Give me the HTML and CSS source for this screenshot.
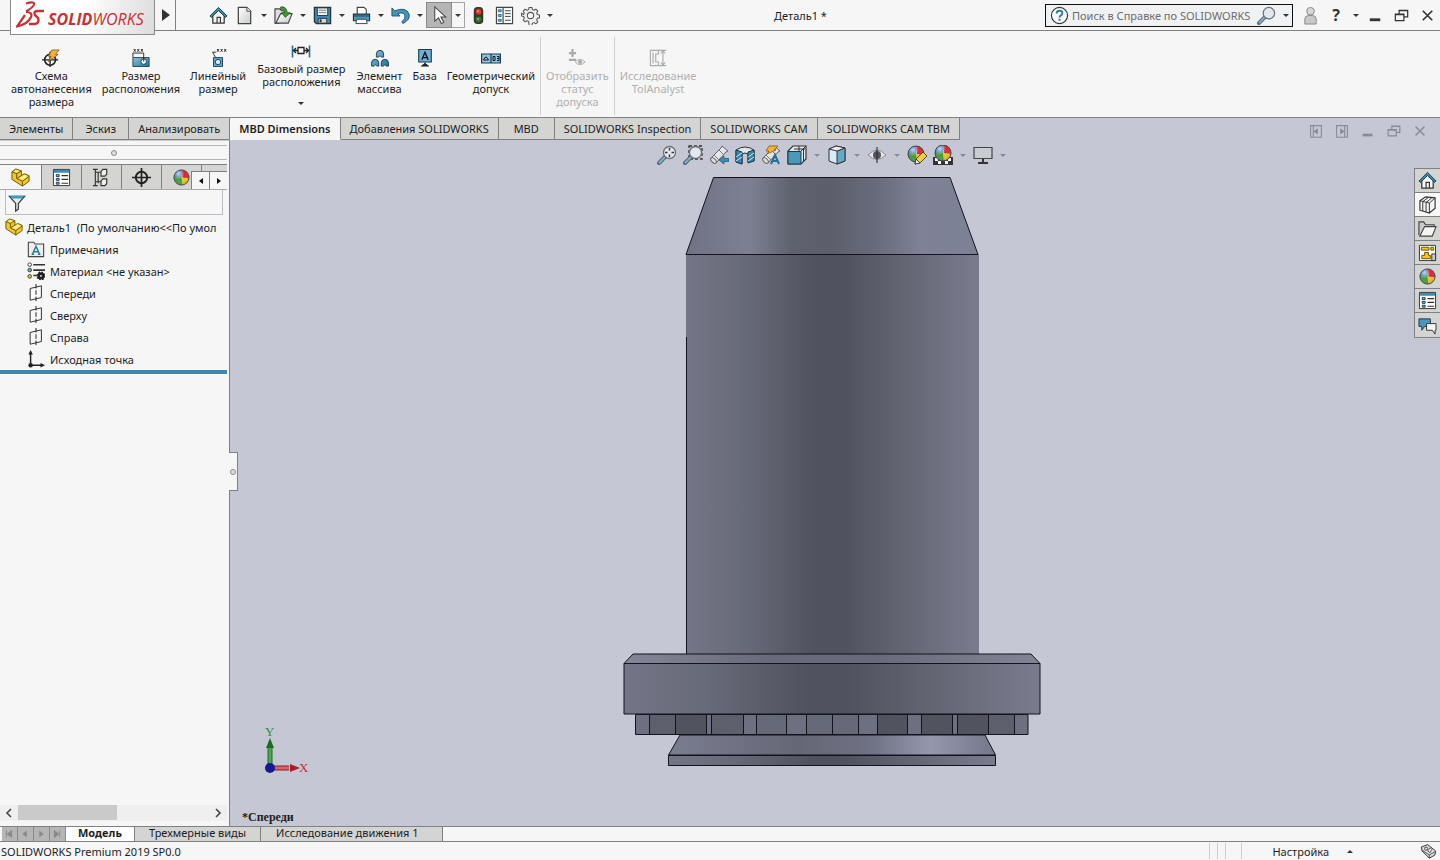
FILE: index.html
```html
<!DOCTYPE html>
<html lang="ru">
<head>
    <meta charset="UTF-8">
    <meta name="viewport" content="width=device-width, initial-scale=1.0">
    <title>Деталь1 - SOLIDWORKS</title>
    <link rel="stylesheet" href="styles.css">
</head>
<body>
    <!-- shared icons -->
    <svg class="sprite" aria-hidden="true">
        <defs>
            <linearGradient id="g-steel" x1="0" x2="1" y1="0" y2="1"><stop offset="0" stop-color="#8fc3dc"/><stop offset="1" stop-color="#256f96"/></linearGradient>
            <linearGradient id="g-paper" x1="0" x2="1" y1="0" y2="1"><stop offset="0" stop-color="#fff"/><stop offset="1" stop-color="#c9cbcc"/></linearGradient>
            <clipPath id="ball"><circle cx="10" cy="10" r="8"/></clipPath>
            <radialGradient id="g-shine" cx=".35" cy=".3" r=".8"><stop offset="0" stop-color="#fff" stop-opacity=".7"/><stop offset=".4" stop-color="#fff" stop-opacity="0"/><stop offset="1" stop-color="#000" stop-opacity=".4"/></radialGradient>
        </defs>
        <symbol id="i-home" viewBox="0 0 20 20">
            <path d="M4 10v8h12v-8l-6-6z" fill="#f6f6f6" stroke="#333" stroke-width="1.3"/>
            <path d="M8.500 18v-6h3.500v6" fill="none" stroke="#333" stroke-width="1.200"/>
            <path d="M1 10.500 10 1.500l9 9-1.500 1.500L10 4.800 2.500 12z" fill="#3f8bb0" stroke="#173c50"/>
        </symbol>
        <symbol id="i-ball" viewBox="0 0 20 20">
            <g clip-path="url(#ball)">
                <path d="M0 0h11l-1 10-10 1z" fill="#2f6fc4"/><path d="M10 0h10v13l-9-3z" fill="#d8262c"/>
                <path d="M0 10l10-1 2 11H0z" fill="#3f9d3a"/><path d="M10 10l10 1v9h-9z" fill="#f0c22c"/>
                <path d="M0 0h20v20H0z" fill="url(#g-shine)"/>
            </g>
            <circle cx="10" cy="10" r="8" fill="none" stroke="#444"/>
        </symbol>
        <symbol id="i-list" viewBox="0 0 20 20">
            <path d="M1.500 1.500h17v17h-17z" fill="#fff" stroke="#333"/><path d="M2 2h16v3H2z" fill="#3f8bb0"/>
            <path d="M4.500 7h3v2h-3zM4.500 11h3v2h-3zM4.500 15h3v2h-3z" fill="#8fc3dc" stroke="#173c50"/>
            <path d="M10 8h7M10 12h7M10 16h7" stroke="#333" stroke-width="1.200"/>
        </symbol>
        <symbol id="i-part" viewBox="0 0 20 20">
            <path d="M1 4l4-3 6 2v5l3-2 5 2v6l-7 5-11-7z" fill="#f2c62f" stroke="#6b5200" stroke-linejoin="round"/>
            <path d="M1 4l5 2 5-3M6 6v5l6 3 7-5M12 14v5M6 11l5-3" fill="none" stroke="#6b5200"/>
            <path d="M3 4l2.500-2L9 3.200 6 5zM8 10.800l3-1.800 3-2 3.500 1.500L12 12.800z" fill="#ffeb8a"/>
        </symbol>
        <symbol id="i-plane" viewBox="0 0 20 20">
            <path d="M3.500 5 16 2v13L3.500 18z" fill="#fafafa" stroke="#333" stroke-width="1.100"/>
            <path d="M10 0v20" stroke="#222" stroke-width="1.100" stroke-dasharray="5 2"/>
        </symbol>
        <symbol id="i-min" viewBox="0 0 20 20"><path d="M4 13h11v3H4z" fill="currentColor"/></symbol>
        <symbol id="i-restore" viewBox="0 0 20 20"><path d="M3.500 8.500h9v7h-9zM7.500 8V4.500h9v7H13M3 9h10M7 5h10" fill="none" stroke="currentColor" stroke-width="1.300"/></symbol>
        <symbol id="i-close" viewBox="0 0 20 20"><path d="M5 5l10 10M15 5 5 15" stroke="currentColor" stroke-width="1.700"/></symbol>
        <symbol id="i-glass" viewBox="0 0 20 20">
            <path d="M2 18l6-6" stroke="#59666f" stroke-width="4" stroke-linecap="round"/><path d="M2.500 17.500 8 12" stroke="#7fb2c9" stroke-width="2" stroke-linecap="round"/>
            <circle cx="12.500" cy="7.500" r="6" fill="#e3e8ee" stroke="#6b7077" stroke-width="1.300"/>
        </symbol>
        <symbol id="i-scope" viewBox="0 0 20 20">
            <path d="M2 13 12 3l1-2 6 5-2 1L8 17l-4 1z" fill="url(#g-paper)" stroke="#666"/>
            <path d="M5 10l5 5M10 5l5 5" stroke="#777" fill="none"/><ellipse cx="4.500" cy="15.500" rx="2" ry="3.500" transform="rotate(-45 4.500 15.500)" fill="#ddd" stroke="#666"/>
        </symbol>
    </svg>

    <header class="titlebar">
        <a class="logo" href="#" aria-label="SOLIDWORKS">
            <svg class="logo-mark" viewBox="0 0 28 28" aria-hidden="true">
                <path d="M10 2.500q9-2.500 8 1-1 3-8 7M10 11q7 0 5 5-3 7-14 9.500L9 14" fill="none" stroke="#c8312f" stroke-width="2.200"/>
                <path d="M28 10h-6q-5 0-3 4l3 3q2 5-3 6h-6" fill="none" stroke="#c8312f" stroke-width="2.400"/>
            </svg>
            <span class="logo-text"><b>SOLID</b>WORKS</span>
        </a>
        <button class="flyout" aria-label="Меню"></button>
        <nav class="quick">
            <button class="tool" aria-label="Домой"><svg class="icon"><use href="#i-home"/></svg></button>
            <button class="tool" aria-label="Создать"><svg class="icon" viewBox="0 0 20 20"><path d="M3.500 1.500h9l4 4v13h-13z" fill="url(#g-paper)" stroke="#444" stroke-width="1.300"/><path d="M12.500 1.500v4h4" fill="#fff" stroke="#444"/></svg></button>
            <button class="caret" aria-label="Ещё"></button>
            <button class="tool" aria-label="Открыть"><svg class="icon" viewBox="0 0 20 20"><path d="M1 18V3h5l2 2h3v4l-6 9z" fill="#ddd" stroke="#444" stroke-width="1.200"/><path d="M2 18l5-10h12l-4 10z" fill="url(#g-paper)" stroke="#444" stroke-width="1.200"/><path d="M7 1q6-1 7 6h3l-5 5-4-5h3q0-3-4-4z" fill="#3f9d26" stroke="#1d5a12" stroke-width=".8"/></svg></button>
            <button class="caret" aria-label="Ещё"></button>
            <button class="tool" aria-label="Сохранить"><svg class="icon" viewBox="0 0 20 20"><path d="M1.500 1.500h17v17h-15l-2-2z" fill="#3f8bb0" stroke="#24343e" stroke-width="1.400"/><path d="M4.500 2h11v8h-11z" fill="#f4f6f7" stroke="#24343e"/><path d="M6 4.500h8M6 7h8" stroke="#777"/><path d="M5.500 13h9v5h-9z" fill="#d8dadb" stroke="#24343e"/><path d="M7 14h2v3H7z" fill="#24343e"/></svg></button>
            <button class="caret" aria-label="Ещё"></button>
            <button class="tool" aria-label="Печать"><svg class="icon" viewBox="0 0 20 20"><path d="M5.500 9V1.500h7l2.500 2V9" fill="#fff" stroke="#444" stroke-width="1.200"/><path d="M1.500 8.500h17v7h-17z" fill="#4c9ac0" stroke="#24343e" stroke-width="1.200"/><path d="M2 10.500h16" stroke="#173c50"/><path d="M5 14h10l1 4.500H4z" fill="#fff" stroke="#444"/></svg></button>
            <button class="caret" aria-label="Ещё"></button>
            <button class="tool" aria-label="Отменить"><svg class="icon" viewBox="0 0 20 20"><path d="M1 2v8.500h8.500L7 8q6-2 7.500 1.500 1.500 4-3 7l1 2q8-4 6.500-10Q16 .500 4 5z" fill="#4694bb" stroke="#1f5674"/></svg></button>
            <button class="caret" aria-label="Ещё"></button>
            <button class="tool pressed" aria-label="Выбрать"><svg class="icon" viewBox="0 0 20 20"><path d="M5 1v15l4-3.500 3 6 2.500-1.500-3-5.500h5z" fill="#fff" stroke="#444" stroke-width="1.100"/></svg></button>
            <button class="caret framed" aria-label="Ещё"></button>
            <button class="tool" aria-label="Перестроить"><svg class="icon" viewBox="0 0 20 20"><rect x="5" y="1" width="10" height="18" rx="4" fill="#3a3432"/><circle cx="10" cy="6" r="3" fill="#dd3a27"/><circle cx="9.500" cy="5.500" r="1" fill="#f7a08c"/><circle cx="10" cy="14" r="3" fill="#2f7d2c"/><circle cx="9.500" cy="13.500" r="1" fill="#8cc98a"/></svg></button>
            <button class="tool" aria-label="Свойства файла"><svg class="icon" viewBox="0 0 20 20"><path d="M1.500 1.500h17v17h-17zM8.500 2v16" fill="#f7f7f7" stroke="#444" stroke-width="1.200"/><path d="M3.500 4h3v2h-3zM3.500 9h3v2h-3zM3.500 14h3v2h-3z" fill="#8fc3dc" stroke="#256f96"/><path d="M10.500 5h6M10.500 8h6M10.500 11h6M10.500 15h6" stroke="#444"/></svg></button>
            <button class="tool" aria-label="Параметры"><svg class="icon" viewBox="0 0 20 20"><path d="M8.500 1.500h3l.5 2.300 1.700.7 2-1.200 2 2-1.200 2 .7 1.700 2.300.5v3l-2.300.5-.7 1.700 1.200 2-2 2-2-1.200-1.700.7-.5 2.300h-3L8 16.200l-1.700-.7-2 1.200-2-2 1.200-2-.7-1.700-2.300-.5v-3L2.800 9l.7-1.700-1.200-2 2-2 2 1.200L8 3.800z" fill="#eee" stroke="#555" stroke-width="1.100" stroke-linejoin="round"/><circle cx="10" cy="10" r="3.300" fill="#f6f6f6" stroke="#555" stroke-width="1.100"/></svg></button>
            <button class="caret" aria-label="Ещё"></button>
        </nav>
        <div class="doc-title">Деталь1 *</div>
        <div class="search">
            <svg class="icon" viewBox="0 0 20 20" aria-hidden="true"><circle cx="10" cy="10" r="8.500" fill="#f7fafb" stroke="#333" stroke-width="1.200"/><path d="M7 8q0-3 3-3t3 2.500q0 1.500-1.500 2.300T10 12M10 13.500v2" fill="none" stroke="#2b7f9b" stroke-width="2"/></svg>
            <input type="text" aria-label="Поиск в Справке по SOLIDWORKS" placeholder="Поиск в Справке по SOLIDWORKS">
            <button class="tool" aria-label="Найти"><svg class="icon"><use href="#i-glass"/></svg></button>
            <button class="caret" aria-label="Ещё"></button>
        </div>
        <button class="tool" aria-label="Вход"><svg class="icon" viewBox="0 0 20 20"><path d="M4 19v-5q0-4 4-4h4q4 0 4 4v5z" fill="#c8c8c8" stroke="#888"/><circle cx="10" cy="5.500" r="4" fill="#d8d8d8" stroke="#888"/></svg></button>
        <button class="tool help" aria-label="Справка">?</button>
        <button class="caret" aria-label="Ещё"></button>
        <button class="tool window" aria-label="Свернуть"><svg class="icon"><use href="#i-min"/></svg></button>
        <button class="tool window" aria-label="Восстановить"><svg class="icon"><use href="#i-restore"/></svg></button>
        <button class="tool window" aria-label="Закрыть"><svg class="icon"><use href="#i-close"/></svg></button>
    </header>

    <section class="ribbon">
        <button class="command">
            <svg class="icon" viewBox="0 0 20 20"><circle cx="9" cy="12" r="6" fill="none" stroke="#222" stroke-width="1.800"/><path d="M9 3v17M0 12h18" stroke="#222" stroke-width="1.500"/><path d="M11 1h8l-4 5h3L7 14l3-6H7z" fill="#f5b335" stroke="#7a4a00" stroke-width=".8"/></svg>
            <span>Схема<br>автонанесения<br>размера</span>
        </button>
        <button class="command">
            <svg class="icon" viewBox="0 0 20 20"><path d="M1 9.500h18v10H1z" fill="url(#g-steel)" stroke="#173c50"/><circle cx="13" cy="14" r="3" fill="#fff" stroke="#173c50"/><path d="M1 9V4.500h12V14M2 0l2 3m0-3L2 3M6 0l2 3m0-3L6 3M10 0l2 3m0-3-2 3" fill="none" stroke="#222"/></svg>
            <span>Размер<br>расположения</span>
        </button>
        <button class="command">
            <svg class="icon" viewBox="0 0 20 20"><path d="M5 9.500h10v10H5z" fill="#63a9c9" stroke="#173c50"/><circle cx="10" cy="14.500" r="3" fill="#d8ecf5" stroke="#173c50"/><path d="M7 9 4 3.500h4M9 0l2 3m0-3L9 3M13 0l2 3m0-3-2 3M17 0l2 3m0-3-2 3" fill="none" stroke="#222"/></svg>
            <span>Линейный<br>размер</span>
        </button>
        <button class="command tall">
            <svg class="icon low" viewBox="0 0 20 12"><path d="M1.500 0v12M18.500 0v12" stroke="#256f96" stroke-width="1.600"/><path d="M2 5h16M5 2.500 2.500 5 5 7.500M15 2.500 17.500 5 15 7.500" fill="none" stroke="#222" stroke-width="1.300"/><path d="M7 2h6v6H7z" fill="#fff" stroke="#222" stroke-width="1.300"/></svg>
            <span>Базовый размер<br>расположения</span>
            <i class="arrow"></i>
        </button>
        <button class="command">
            <svg class="icon" viewBox="0 0 20 20"><g fill="url(#g-steel)" stroke="#173c50"><path d="M6 9V5.500a4 4 0 0 1 8 0V9h-2.500q-1.500-3-3 0zM.6 19v-3.500a4 4 0 0 1 8 0V19H6.500q-1.500-3-3 0zM11.400 19v-3.500a4 4 0 0 1 8 0V19h-2.500q-1.500-3-3 0z"/></g></svg>
            <span>Элемент<br>массива</span>
        </button>
        <button class="command">
            <svg class="icon" viewBox="0 0 20 20"><path d="M3 .500h14v14H3z" fill="#6db2d2" stroke="#173c50" stroke-width="1.200"/><path d="M6.500 12 10 3.500l3.500 8.500M7.500 9.500h5" fill="none" stroke="#112" stroke-width="1.500"/><path d="M10 15v3M6 19h8l-4-3z" fill="#222" stroke="#222"/></svg>
            <span>База</span>
        </button>
        <button class="command">
            <svg class="icon" viewBox="0 1 20 18"><path d="M.6 6h18.800v9H.6zM10 6v9" fill="#8cc6e0" stroke="#173c50" stroke-width="1.200"/><path d="M2.500 12q2.500-6 5 0zM12 8.500h2v4h-2zM16 8.500h2v4h-2M16 10.500h2" fill="none" stroke="#112"/></svg>
            <span>Геометрический<br>допуск</span>
        </button>
        <div class="divider"></div>
        <button class="command" disabled>
            <svg class="icon" viewBox="0 0 20 20"><path d="M5 0v9M1 4.500h8M1 12h8" stroke="#aaa" stroke-width="2.500"/><path d="M8 14.500q5-6 11 0-6 6-11 0z" fill="#eee" stroke="#aaa"/><circle cx="13.500" cy="14.500" r="2.300" fill="#aaa"/></svg>
            <span>Отобразить<br>статус<br>допуска</span>
        </button>
        <div class="divider"></div>
        <button class="command" disabled>
            <svg class="icon" viewBox="0 0 20 20"><path d="M1.500 1.500h9v4h-3v9h3v4h-9zM4.500 4v12M10 1.500h9M10 18.500h9M15.500 2v16M13 5l2.500-3L18 5M13 15l2.500 3 2.500-3" fill="none" stroke="#aaa" stroke-width="1.200"/></svg>
            <span>Исследование<br>TolAnalyst</span>
        </button>
    </section>

    <nav class="tabs">
        <button>Элементы</button>
        <button>Эскиз</button>
        <button>Анализировать</button>
        <button class="active">MBD Dimensions</button>
        <button>Добавления SOLIDWORKS</button>
        <button>MBD</button>
        <button>SOLIDWORKS Inspection</button>
        <button>SOLIDWORKS CAM</button>
        <button>SOLIDWORKS CAM TBM</button>
        <div class="doc-controls">
            <a href="#" aria-label="Панель слева"><svg class="icon" viewBox="0 0 20 20"><path d="M4 4h12v13H4zM7 4v13" fill="none" stroke="currentColor" stroke-width="1.200"/><path d="M12 7v7l-5-3.500z" fill="currentColor"/></svg></a>
            <a href="#" aria-label="Панель справа"><svg class="icon" viewBox="0 0 20 20"><path d="M4 4h12v13H4zM13 4v13" fill="none" stroke="currentColor" stroke-width="1.200"/><path d="M8 7v7l5-3.500z" fill="currentColor"/></svg></a>
            <a href="#" aria-label="Свернуть"><svg class="icon"><use href="#i-min"/></svg></a>
            <a href="#" aria-label="Восстановить"><svg class="icon"><use href="#i-restore"/></svg></a>
            <a href="#" aria-label="Закрыть"><svg class="icon"><use href="#i-close"/></svg></a>
        </div>
    </nav>

    <main class="workspace">
        <aside class="panel">
            <div class="splitter"><i class="knob"></i></div>
            <div class="panel-tabs">
                <button class="active" aria-label="Дерево"><svg class="icon"><use href="#i-part"/></svg></button>
                <button aria-label="Свойства"><svg class="icon"><use href="#i-list"/></svg></button>
                <button aria-label="Конфигурации"><svg class="icon" viewBox="0 0 20 20"><path d="M3.500 1v18M3.500 4.500h6M3.500 14.500h6M1 1.500h5M1 18.500h5M6.500 4v12" fill="none" stroke="#333" stroke-width="1.200"/><path d="M9.500 3.500l2-2h4v5l-2 2h-4zM9.500 13.500l2-2h4v5l-2 2h-4z" fill="#eee" stroke="#333" stroke-width="1.200"/></svg></button>
                <button aria-label="Размеры"><svg class="icon" viewBox="0 0 20 20"><circle cx="10" cy="10" r="6" fill="none" stroke="#222" stroke-width="2"/><path d="M10 0v20M0 10h20" stroke="#222" stroke-width="1.800"/></svg></button>
                <button aria-label="Внешний вид"><svg class="icon"><use href="#i-ball"/></svg></button>
                <div class="scroller">
                    <button aria-label="Назад"><i class="arrow left"></i></button>
                    <button aria-label="Вперёд"><i class="arrow right"></i></button>
                </div>
            </div>
            <div class="filter">
                <svg class="icon" viewBox="0 0 20 20" aria-hidden="true"><path d="M1.500 2.500h17l-7 8V17l-3 2v-8.500z" fill="#e4eaed" stroke="#333" stroke-width="1.300"/><path d="M2 2h16l-2 3H4z" fill="#3f9cb8"/></svg>
                <input type="text" aria-label="Фильтр">
            </div>
            <ul class="tree">
                <li class="root"><svg class="icon"><use href="#i-part"/></svg><span>Деталь1&nbsp; (По умолчанию&lt;&lt;По умол</span></li>
                <li><svg class="icon" viewBox="0 0 20 20"><path d="M1.500 18.500v-16h6l1.500 2h9.500v14z" fill="#eee" stroke="#444" stroke-width="1.200"/><path d="M6 16l4-9 4 9M7.500 13h5M5 16h3M12 16h3" fill="none" stroke="#2b7f9b" stroke-width="1.600"/></svg><span>Примечания</span></li>
                <li><svg class="icon" viewBox="0 0 20 20"><g stroke="#333"><circle cx="3" cy="3" r="2" fill="#fff"/><circle cx="3" cy="9" r="2" fill="#63b2d6"/><circle cx="3" cy="16" r="2" fill="#e6cf3a"/><path d="M7 3h13M7 9h13M7 15h4" stroke-width="1.800"/></g><circle cx="15.500" cy="15.500" r="2.500" fill="none" stroke="#222" stroke-width="3"/><circle cx="15.500" cy="15.500" r="4.200" fill="none" stroke="#222" stroke-width="1.500" stroke-dasharray="1.800 1.500"/></svg><span>Материал &lt;не указан&gt;</span></li>
                <li><svg class="icon"><use href="#i-plane"/></svg><span>Спереди</span></li>
                <li><svg class="icon"><use href="#i-plane"/></svg><span>Сверху</span></li>
                <li><svg class="icon"><use href="#i-plane"/></svg><span>Справа</span></li>
                <li><svg class="icon" viewBox="0 0 20 20"><path d="M4 3v14h13" fill="none" stroke="#222" stroke-width="1.600"/><path d="M1.500 5 4 0l2.500 5zM15 14.500l5 2.500-5 2.500z" fill="#222"/><circle cx="4" cy="17" r="2.500" fill="#222"/></svg><span>Исходная точка</span></li>
            </ul>
            <div class="hscroll">
                <button aria-label="Влево"><svg viewBox="0 0 8 10"><path d="M6 1 2 5l4 4" fill="none" stroke="#444" stroke-width="1.600"/></svg></button>
                <div class="track"><div class="thumb"></div></div>
                <button aria-label="Вправо"><svg viewBox="0 0 8 10"><path d="M2 1l4 4-4 4" fill="none" stroke="#444" stroke-width="1.600"/></svg></button>
            </div>
        </aside>

        <section class="viewport">
            <svg class="model" viewBox="230 140 1210 686" role="img" aria-label="Деталь">
                <defs>
                    <linearGradient id="m-body"><stop offset="0" stop-color="#747687"/><stop offset=".2" stop-color="#676a78"/><stop offset=".44" stop-color="#50525f"/><stop offset=".54" stop-color="#51525f"/><stop offset=".75" stop-color="#656674"/><stop offset="1" stop-color="#7a7b8d"/></linearGradient>
                    <linearGradient id="m-top"><stop offset="0" stop-color="#6f7385"/><stop offset=".22" stop-color="#7d8092"/><stop offset=".36" stop-color="#5e616e"/><stop offset=".5" stop-color="#5c5f6b"/><stop offset=".66" stop-color="#696c7c"/><stop offset=".8" stop-color="#7f8296"/><stop offset="1" stop-color="#7c8195"/></linearGradient>
                    <linearGradient id="m-foot"><stop offset="0" stop-color="#7a7d90"/><stop offset=".4" stop-color="#656776"/><stop offset=".62" stop-color="#6f7284"/><stop offset=".8" stop-color="#9498ae"/><stop offset="1" stop-color="#74778a"/></linearGradient>
                    <linearGradient id="m-bevel"><stop offset="0" stop-color="#858698"/><stop offset=".35" stop-color="#686a7a"/><stop offset=".6" stop-color="#686a79"/><stop offset="1" stop-color="#838597"/></linearGradient>
                </defs>
                <g stroke="#12131b" stroke-linejoin="round">
                    <path d="M680 735h305l10.500 20h-327z" fill="url(#m-foot)"/>
                    <path d="M668.500 755.500h327v10h-327z" fill="url(#m-body)"/>
                    <path d="M686 254.500h293V654H686z" fill="url(#m-body)" stroke="none"/>
                    <path d="M713.500 177.500h236.500l28 77H686z" fill="url(#m-top)"/>
                    <path d="M686.500 337v317" fill="none"/>
                    <path d="M633 654h398l9 9.500H624z" fill="url(#m-bevel)"/>
                    <path d="M624 663.500h416V714H624z" fill="url(#m-body)"/>
                    <path d="M635.500 714.500h392.500v20H635.500z" fill="#6d7080"/>
                    <path d="M649.500 714.500h26v20h-26zM711.500 714.500h32v20h-32zM988.500 714.500h26v20h-26z" fill="#5d606c"/>
                    <path d="M675.500 714.500h31v20h-31zM877.500 714.500h30v20h-30zM921.500 714.500h31v20h-31zM957.500 714.500h31v20h-31z" fill="#51535f"/>
                    <path d="M756.500 714.500h30v20h-30zM806.500 714.500h26v20h-26zM832.500 714.500h26v20h-26z" fill="#666977"/>
                </g>
                <g class="triad">
                    <path d="M270 746v20" stroke="#4fa556" stroke-width="4"/><path d="M266 748l4-10 4 10z" fill="#1c6b24"/>
                    <path d="M272 768h17" stroke="#d8636b" stroke-width="4"/><path d="M272 766h17M272 770h17" stroke="#8b1c26"/><path d="M290 764l10 4-10 4z" fill="#a51d28"/>
                    <path d="M268 747v18M272 747v18" stroke="#1c6b24"/>
                    <circle cx="270" cy="768" r="5" fill="#141b92"/>
                    <text x="265" y="736" fill="#2f8a43">Y</text>
                    <text x="299" y="772" fill="#c52b3b">X</text>
                </g>
            </svg>
            <nav class="hud">
                <button class="tool" aria-label="Во весь экран"><svg class="icon" viewBox="0 0 20 20"><use href="#i-glass"/><path d="M12.500 3v9M8 7.500h9" stroke="#333" stroke-width="1.500" stroke-dasharray="2.500 4"/></svg></button>
                <button class="tool" aria-label="Увеличить область"><svg class="icon" viewBox="0 0 20 20"><path d="M6 1h13v13H6z" fill="none" stroke="#333" stroke-width="1.300" stroke-dasharray="3 2"/><use href="#i-glass"/></svg></button>
                <button class="tool" aria-label="Предыдущий вид"><svg class="icon" viewBox="0 0 20 20"><use href="#i-scope"/><path d="M10 15l5-4v2.500h5v3h-5V19z" fill="#3f8bb0" stroke="#1f5674" stroke-width=".7"/></svg></button>
                <button class="tool" aria-label="Разрез"><svg class="icon" viewBox="0 0 20 20"><path d="M1 5q9-6 18 0v11l-6 1V9q-3-2-6 0v10l-6-2z" fill="#e0e5e8" stroke="#333"/><path d="M1 5l6 2v12l-6-2zM13 7l6-2v11l-6 2z" fill="#3b87ac" stroke="#173c50"/><path d="M1 12l6-4M1 16l6-4M13 12l6-4M13 16l6-4" stroke="#c6e4f1"/></svg></button>
                <button class="tool" aria-label="Динамические примечания"><svg class="icon" viewBox="0 0 20 20"><use href="#i-scope"/><path d="M8 1h9l-4 4h2L6 9l2-3H5z" fill="#f5b335" stroke="#8a5500" stroke-width=".8"/><path d="M10 19l4-9 4 9M11.500 16h5" fill="none" stroke="#256f96" stroke-width="2"/></svg></button>
                <button class="tool" aria-label="Ориентация видов"><svg class="icon" viewBox="0 0 20 20"><path d="M1 6l5-5h13v13l-5 5H1z" fill="#e3e8ea" stroke="#333" stroke-width="1.200"/><path d="M1 6.500h13V19H1z" fill="#4c96ba" stroke="#173c50"/><path d="M14 6l5-5M12 1v5M16.500 4v12M7 4h11" stroke="#333" fill="none"/></svg></button>
                <button class="caret" aria-label="Ещё"></button>
                <button class="tool" aria-label="Стиль отображения"><svg class="icon" viewBox="0 0 20 20"><path d="M2 4l7-3 9 2v13l-8 3-8-3z" fill="#d7edf6" stroke="#333"/><path d="M10 6l8-3v13l-8 3z" fill="#65a9c9" stroke="#333"/><path d="M2 4l7-3 9 2-8 3z" fill="#e9f0f3" stroke="#333"/></svg></button>
                <button class="caret" aria-label="Ещё"></button>
                <button class="tool" aria-label="Скрыть/отобразить"><svg class="icon" viewBox="0 0 20 20"><path d="M1 10q9-10 18 0-9 9-18 0z" fill="#e5e5e8" stroke="#888"/><circle cx="10" cy="10" r="4" fill="#55585e"/><path d="M10 2v16" stroke="#222"/></svg></button>
                <button class="caret" aria-label="Ещё"></button>
                <button class="tool" aria-label="Внешний вид"><svg class="icon" viewBox="0 0 20 20"><use href="#i-ball" x="-1" y="-1"/><path d="M8 19l1-5 7-7 4 4-7 7z" fill="#f0cf45" stroke="#5d4500"/><path d="M8 19l1-5 4 4z" fill="#eee" stroke="#444"/></svg></button>
                <button class="tool" aria-label="Сцена"><svg class="icon" viewBox="0 0 20 20"><path d="M0 12h20v8H0z" fill="#333"/><path d="M2 13h3v3H2zM15 13h3v3h-3zM5 16h3v3H5zM12 16h3v3h-3z" fill="#fff"/><use href="#i-ball" y="-2"/></svg></button>
                <button class="caret" aria-label="Ещё"></button>
                <button class="tool" aria-label="Настройки вида"><svg class="icon" viewBox="0 0 20 20"><path d="M1 2.500h18v11H1z" fill="#c9cdd3" stroke="#444" stroke-width="1.200"/><path d="M10 14v4M5 18h10" stroke="#333" stroke-width="2"/></svg></button>
                <button class="caret" aria-label="Ещё"></button>
            </nav>
            <nav class="taskpane">
                <a href="#" aria-label="Ресурсы"><svg class="icon"><use href="#i-home"/></svg></a>
                <a class="active" href="#" aria-label="Библиотека"><svg class="icon" viewBox="0 0 20 20"><path d="M2 6l6-4 10 1v11l-6 5-10-3z" fill="#f4f4f4" stroke="#333" stroke-width="1.200"/><path d="M5 7v10M8.500 8v10M12 8.500V19M2 6l10 2.500L18 3M5 7l6-4.500M8.500 8l6-5" fill="none" stroke="#333"/></svg></a>
                <a href="#" aria-label="Проводник"><svg class="icon" viewBox="0 0 20 20"><path d="M1 17V3h5l2 3h9v3" fill="#c9c9c9" stroke="#444" stroke-width="1.200"/><path d="M2 18 7 8h12l-4 10z" fill="#f5f5f5" stroke="#444" stroke-width="1.200"/></svg></a>
                <a href="#" aria-label="Палитра видов"><svg class="icon" viewBox="0 0 20 20"><path d="M1.500 2.500h17v16h-17z" fill="#fff" stroke="#333"/><path d="M3.500 4.500h8v3h-8zM13.500 4.500h3v3h-3zM7 10h4v3h2v3.500H4V13h3z" fill="#f2c62f" stroke="#6b5200"/><path d="M14.500 11.500h4v7h-4z" fill="#ccc" stroke="#333"/></svg></a>
                <a href="#" aria-label="Внешние виды"><svg class="icon"><use href="#i-ball"/></svg></a>
                <a href="#" aria-label="Свойства"><svg class="icon"><use href="#i-list"/></svg></a>
                <a href="#" aria-label="Форум"><svg class="icon" viewBox="0 0 20 20"><path d="M1 3h12v8H7l-3 4v-4H1z" fill="#4c96ba" stroke="#173c50"/><path d="M9 8h10v7h-1v4l-3-4H9z" fill="#f5f5f5" stroke="#333"/></svg></a>
            </nav>
            <button class="handle" aria-label="Скрыть панель"><i class="knob"></i></button>
            <div class="view-name">*Спереди</div>
        </section>
    </main>

    <nav class="sheets">
        <div class="pager">
            <button aria-label="Первая"><svg viewBox="0 0 16 14"><path d="M5 3v8M11 3v8L6 7z" fill="#888" stroke="#888"/></svg></button>
            <button aria-label="Предыдущая"><svg viewBox="0 0 16 14"><path d="M10 3v8L5 7z" fill="#888"/></svg></button>
            <button aria-label="Следующая"><svg viewBox="0 0 16 14"><path d="M6 3v8l5-4z" fill="#888"/></svg></button>
            <button aria-label="Последняя"><svg viewBox="0 0 16 14"><path d="M11 3v8M5 3v8l5-4z" fill="#888" stroke="#888"/></svg></button>
        </div>
        <button class="sheet active">Модель</button>
        <button class="sheet">Трехмерные виды</button>
        <button class="sheet">Исследование движения 1</button>
    </nav>

    <footer class="statusbar">
        <span class="version">SOLIDWORKS Premium 2019 SP0.0</span>
        <i class="cell"></i><i class="cell"></i><i class="cell wide"></i>
        <button class="custom">Настройка <i class="arrow up"></i></button>
        <svg class="icon" viewBox="0 0 20 20" aria-hidden="true"><path d="M1 5l8-3 10 8-1 5-7 4L2 10z" fill="#ddd" stroke="#333" stroke-width="1.200"/><path d="M2 9l9 6 7-4M11 15v4" fill="none" stroke="#333"/><circle cx="7" cy="7" r="2" fill="none" stroke="#333"/><path d="M9 10l3-4 2 2-2 4z" fill="#fff" stroke="#333"/></svg>
    </footer>
</body>
</html>
```
FILE: styles.css
```css
:root {
    --bg: #f6f6f6;
    --view: #c5c8d4;
    --tab: #d4d4d3;
    --line: #7f8082;
    --text: #1d1d1d;
    --muted: #b0b0b0;
}
* {
    margin: 0;
    padding: 0;
    box-sizing: border-box;
}
body {
    display: flex;
    flex-direction: column;
    height: 100vh;
    overflow: hidden;
    font-family: "Noto Sans", "Open Sans", sans-serif;
    font-size: 11px;
    color: var(--text);
    background: var(--bg);
}
button,
input {
    font: inherit;
    color: inherit;
    background: none;
    border: none;
}
button {
    cursor: pointer;
}
a {
    color: inherit;
    text-decoration: none;
}
.sprite {
    position: absolute;
    width: 0;
    height: 0;
}
.icon {
    display: block;
    flex: none;
    width: 20px;
    height: 20px;
}
.tool {
    display: flex;
    flex: none;
    align-items: center;
    justify-content: center;
    width: 26px;
    height: 26px;
}

/* arrows */
.arrow,
.caret::before {
    content: "";
    display: block;
    border: 3px solid transparent;
    border-top-color: #333;
    border-bottom-width: 0;
}
.arrow.up {
    border-width: 0 3px 3px;
    border-bottom-color: #333;
}
.arrow.left {
    border-width: 3px 4px 3px 0;
    border-color: transparent #111;
}
.arrow.right {
    border-width: 3px 0 3px 4px;
    border-color: transparent #111;
}
.caret {
    display: flex;
    flex: none;
    align-items: center;
    justify-content: center;
    width: 13px;
    height: 26px;
}
.knob {
    width: 6px;
    height: 6px;
    border: 1px solid #8a8a8a;
    border-radius: 50%;
    background: #ddd;
}

/* title bar */
.titlebar {
    display: flex;
    flex: none;
    align-items: center;
    height: 31px;
    border-bottom: 1px solid var(--line);
}
.titlebar .icon {
    width: 19px;
    height: 19px;
}
.logo {
    display: flex;
    align-self: flex-start;
    align-items: center;
    gap: 4px;
    width: 145px;
    height: 35px;
    margin-left: 10px;
    padding-left: 5px;
    border: 1px solid #8c8c8c;
    border-top: none;
    background: linear-gradient(100deg, #fff 50%, #dcdcdc);
    z-index: 1;
}
.logo-mark {
    width: 28px;
    height: 28px;
    margin-bottom: 4px;
}
.logo-text {
    padding-top: 3px;
    font-family: "Open Sans", sans-serif;
    font-size: 16px;
    font-style: italic;
    color: #c8312f;
}
.flyout {
    align-self: stretch;
    width: 21px;
    padding-left: 7px;
    border-right: 1px solid var(--line);
}
.flyout::before {
    content: "";
    display: block;
    border: 6px solid transparent;
    border-left: 8px solid #333;
    border-right: none;
}
.quick {
    display: flex;
    padding-left: 29px;
}
.pressed {
    border: 1px solid #8a8a8a;
    background: #b5b5b5;
}
.framed {
    border: 1px solid #a5a5a5;
    border-left: none;
}
.doc-title {
    flex: 1;
    text-align: center;
}
.search {
    display: flex;
    align-items: center;
    width: 248px;
    height: 23px;
    margin-right: 4px;
    padding-left: 4px;
    border: 1px solid #111;
    background: #f0f1f3;
}
.search input {
    flex: 1;
    min-width: 0;
    padding-left: 3px;
}
.search input::placeholder {
    color: #6c6c6c;
    opacity: 1;
}
.search .tool,
.search .caret {
    height: 21px;
}
.help {
    font-size: 16px;
    font-weight: 700;
    color: #333;
}
.window {
    color: #333;
}

/* ribbon */
.ribbon {
    display: flex;
    flex: none;
    height: 87px;
    padding: 6px 6px 0;
    border-bottom: 1px solid var(--line);
}
.command {
    display: flex;
    flex-direction: column;
    align-items: center;
    padding: 12px 5px 0;
    line-height: 13px;
    text-align: center;
}
.command .icon {
    height: 18px;
    margin-bottom: 2px;
}
.command.tall {
    padding: 8px 6px 0;
}
.command .icon.low {
    height: 13px;
    margin-bottom: 4px;
}
.command .arrow {
    margin-top: 14px;
}
.command:disabled {
    color: var(--muted);
}
.divider {
    width: 1px;
    height: 78px;
    background: #cfcfcf;
}

/* command tabs */
.tabs {
    display: flex;
    flex: none;
    height: 22px;
    background: var(--view);
}
.tabs > button {
    min-width: 56px;
    padding: 0 9px;
    border-right: 1px solid var(--line);
    border-bottom: 1px solid var(--line);
    background: var(--tab);
    line-height: 20px;
}
.tabs > .active {
    border-bottom-color: var(--bg);
    background: var(--bg);
    font-weight: 600;
}
.doc-controls {
    display: flex;
    align-items: flex-end;
    margin-left: auto;
    padding-right: 7px;
    color: #888b94;
}
.doc-controls a {
    display: flex;
    justify-content: center;
    width: 26px;
}
.doc-controls .icon {
    width: 18px;
    height: 18px;
}

/* workspace */
.workspace {
    display: flex;
    flex: 1;
    min-height: 0;
}
.panel {
    display: flex;
    flex: none;
    flex-direction: column;
    width: 230px;
    padding: 4px 2px 5px 0;
    border-right: 1px solid var(--line);
    border-top: 1px solid #c9c9c9;
}
.splitter {
    display: flex;
    align-items: center;
    justify-content: center;
    height: 15px;
    border-top: 1px solid #b5b5b5;
    border-bottom: 1px solid #b5b5b5;
}
.panel-tabs {
    display: flex;
    height: 26px;
    margin-top: 4px;
    border-top: 1px solid var(--line);
    border-bottom: 1px solid #aaa;
    background: var(--tab);
    overflow: hidden;
}
.panel-tabs > button {
    display: flex;
    flex: none;
    align-items: center;
    justify-content: center;
    width: 40px;
    border-right: 1px solid var(--line);
}
.panel-tabs > .active {
    width: 42px;
    background: var(--bg);
}
.panel-tabs .icon {
    width: 19px;
    height: 19px;
}
.scroller {
    display: flex;
    flex: none;
    align-self: flex-end;
    height: 18px;
    margin-left: -11px;
    border-top: 1px solid var(--line);
    background: var(--bg);
}
.scroller button {
    display: flex;
    align-items: center;
    justify-content: center;
    width: 18px;
    border-left: 1px solid var(--line);
}
.filter {
    display: flex;
    align-items: center;
    height: 25px;
    margin: 0 4px 0 5px;
    padding: 2px 0 0 2px;
    border: 1px solid #bcbcc4;
    border-top: none;
}
.filter .icon,
.tree .icon {
    width: 18px;
    height: 18px;
}
.filter input {
    flex: 1;
    min-width: 0;
}
.tree {
    padding-top: 1px;
    border-bottom: 4px solid #4286b4;
    list-style: none;
}
.tree li {
    display: flex;
    align-items: center;
    gap: 5px;
    height: 22px;
    padding-left: 27px;
    white-space: nowrap;
}
.tree .root {
    gap: 4px;
    padding-left: 5px;
}
.hscroll {
    display: flex;
    height: 16px;
    margin-top: auto;
    background: #efefef;
}
.hscroll button {
    width: 18px;
}
.hscroll svg {
    display: block;
    width: 8px;
    height: 10px;
    margin: 0 auto;
}
.track {
    flex: 1;
}
.thumb {
    width: 52%;
    height: 15px;
    background: #cacaca;
}

/* graphics area */
.viewport {
    position: relative;
    flex: 1;
    min-width: 0;
    background: var(--view);
}
.model {
    display: block;
    width: 100%;
    height: 100%;
}
.triad text {
    font-family: "Liberation Serif", serif;
    font-size: 13px;
}
.hud {
    position: absolute;
    top: 2px;
    left: 0;
    right: 0;
    display: flex;
    justify-content: center;
    padding-right: 6px;
}
.hud .caret {
    width: 14px;
}
.hud .caret::before {
    border-top-color: #85889a;
}
.taskpane {
    position: absolute;
    top: 28px;
    right: 0;
    border: 1px solid var(--line);
    border-right: none;
    background: var(--tab);
}
.taskpane a {
    display: flex;
    align-items: center;
    justify-content: center;
    width: 25px;
    height: 24px;
    border-bottom: 1px solid var(--line);
}
.taskpane a:last-child {
    border-bottom: none;
}
.taskpane .active {
    background: #f8f8f8;
}
.taskpane .icon {
    width: 19px;
    height: 19px;
}
.handle {
    position: absolute;
    top: 312px;
    left: -1px;
    display: flex;
    align-items: center;
    justify-content: center;
    width: 9px;
    height: 39px;
    border: 1px solid var(--line);
    border-left: none;
    background: var(--bg);
}
.view-name {
    position: absolute;
    left: 12px;
    bottom: 1px;
    font: bold 12px/16px "Liberation Serif", serif;
}

/* model tabs */
.sheets {
    display: flex;
    flex: none;
    height: 16px;
    padding-left: 2px;
    border-top: 1px solid var(--line);
    border-bottom: 1px solid var(--line);
}
.pager {
    display: flex;
}
.pager button {
    width: 16px;
    border-right: 1px solid #8a8a8a;
    background: #b5b5b5;
}
.pager svg {
    display: block;
    width: 14px;
    height: 14px;
}
.sheet {
    padding: 0 14px 2px;
    border-right: 1px solid var(--line);
    background: var(--tab);
    line-height: 12px;
}
.sheet:last-child {
    padding: 0 23px 2px 15px;
}
.sheet.active {
    padding: 0 12px 2px;
    background: #fff;
    font-weight: 700;
}

/* status bar */
.statusbar {
    display: flex;
    flex: none;
    align-items: center;
    height: 18px;
    padding: 0 3px 0 1px;
}
.version {
    margin-right: auto;
}
.cell {
    width: 8px;
    height: 16px;
    border-left: 1px solid #ccc;
}
.cell.wide {
    width: 17px;
    border-right: 1px solid #ccc;
}
.custom {
    display: flex;
    align-items: center;
    gap: 18px;
    padding: 0 67px 0 30px;
}
.statusbar .icon {
    width: 17px;
    height: 16px;
}
```
